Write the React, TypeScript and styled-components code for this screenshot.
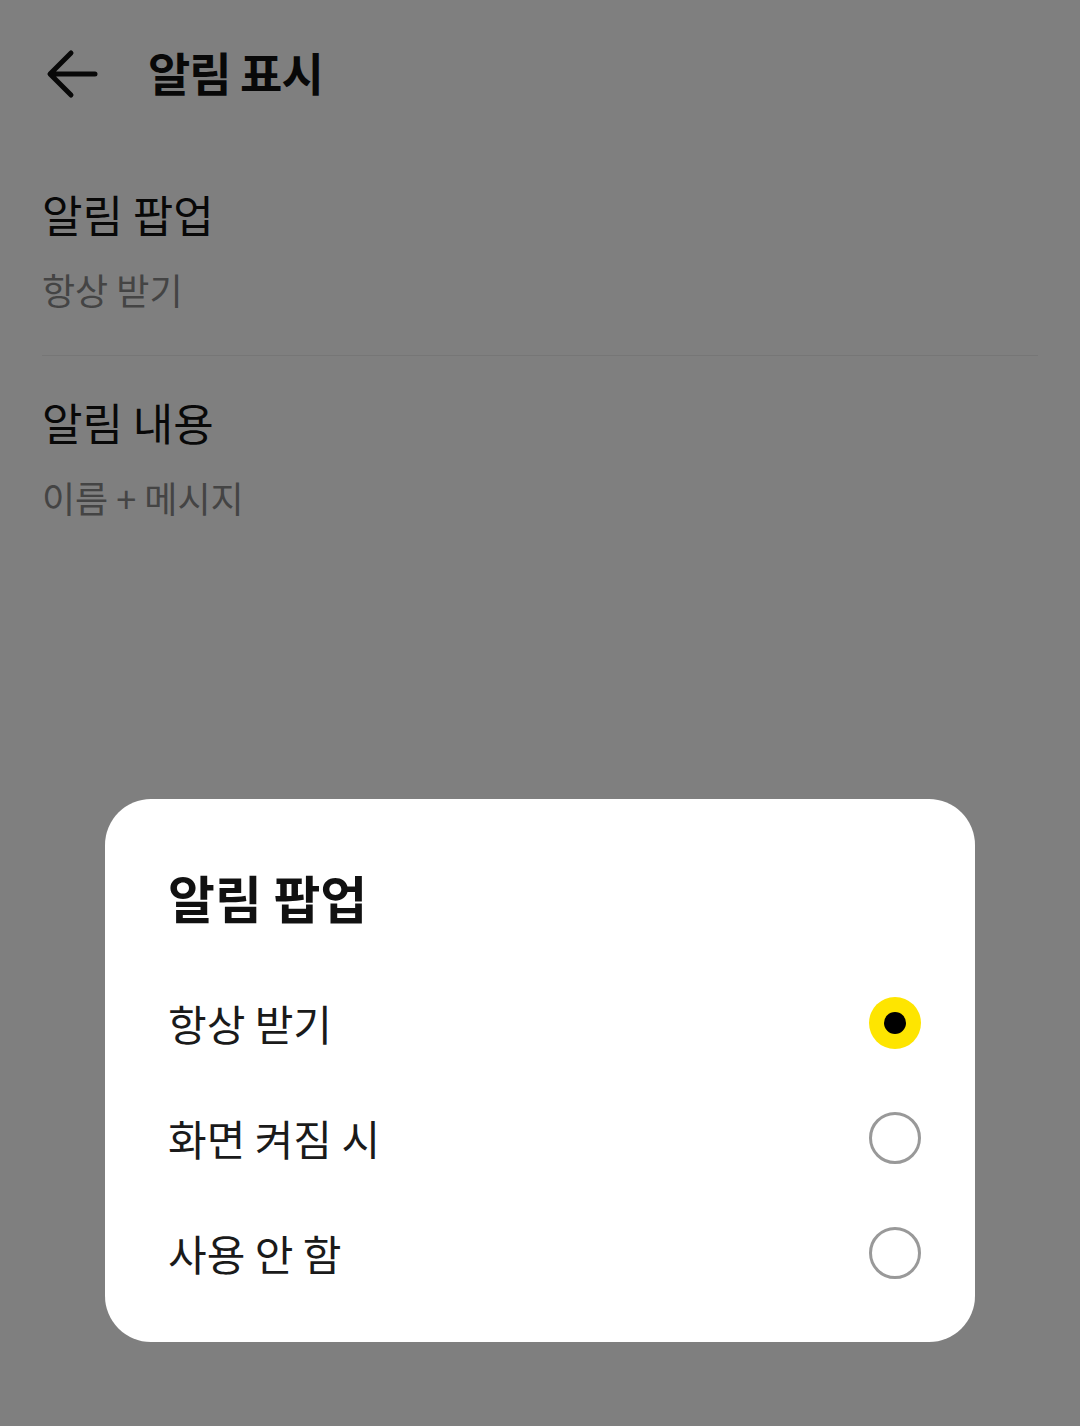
import styled, { createGlobalStyle } from 'styled-components';

const GlobalStyle = createGlobalStyle`
  html, body {
    margin: 0;
    padding: 0;
    background: #ffffff;
    font-family: "Noto Sans CJK KR", "Noto Sans", sans-serif;
  }
`;

const Page = styled.div`
  width: 1080px;
  height: 1426px;
  background: #ffffff;
  overflow: hidden;
`;

const Header = styled.header`
  display: flex;
  align-items: center;
  height: 142px;
  padding: 0 0 6px 44px;
  gap: 48px;
`;

const BackButton = styled.button`
  display: flex;
  align-items: center;
  justify-content: center;
  width: 56px;
  height: 56px;
  margin-top: 6px;
  padding: 0;
  border: none;
  background: none;
  color: #111111;
`;

const HeaderTitle = styled.h1`
  margin: 0;
  font-size: 46px;
  font-weight: 700;
  letter-spacing: -1px;
  color: #111111;
`;

const SettingItem = styled.div<{ $divider?: boolean }>`
  margin: 0 42px;
  padding: 36px 0 ${({ $divider }) => ($divider ? '42px' : '40px')};
  border-bottom: ${({ $divider }) => ($divider ? '1px solid #ececec' : 'none')};
`;

const ItemTitle = styled.div`
  font-size: 44px;
  line-height: 60px;
  color: #111111;
`;

const ItemValue = styled.div`
  margin-top: 21px;
  font-size: 36px;
  line-height: 48px;
  color: #888888;
`;

const Scrim = styled.div`
  position: fixed;
  inset: 0;
  background: rgba(0, 0, 0, 0.5);
  display: flex;
  flex-direction: column;
  justify-content: flex-end;
  align-items: center;
  padding-bottom: 84px;
`;

const Dialog = styled.div`
  width: 870px;
  box-sizing: border-box;
  background: #ffffff;
  border-radius: 46px;
  padding: 60px 54px 32px 63px;
`;

const DialogTitle = styled.h2`
  margin: 0 0 30px;
  font-size: 51px;
  line-height: 76px;
  font-weight: 700;
  color: #111111;
`;

const Option = styled.label`
  display: flex;
  align-items: center;
  justify-content: space-between;
  height: 115px;
`;

const OptionText = styled.span`
  font-size: 42px;
  color: #1a1a1a;
`;

const Radio = styled.span<{ $checked?: boolean }>`
  display: flex;
  align-items: center;
  justify-content: center;
  box-sizing: border-box;
  width: 52px;
  height: 52px;
  border-radius: 50%;
  background: ${({ $checked }) => ($checked ? '#fee500' : 'transparent')};
  border: ${({ $checked }) => ($checked ? 'none' : '3.5px solid #999999')};

  &::after {
    content: '';
    display: ${({ $checked }) => ($checked ? 'block' : 'none')};
    width: 22px;
    height: 22px;
    border-radius: 50%;
    background: #000000;
  }
`;

const options = ['항상 받기', '화면 켜짐 시', '사용 안 함'];

export default function App() {
  return (
    <Page>
      <GlobalStyle />
      <Header>
        <BackButton aria-label="뒤로">
          <svg width="54" height="54" viewBox="0 0 54 54" fill="none">
            <path
              d="M50 27H7M26 6L5 27L26 48"
              stroke="currentColor"
              strokeWidth="5"
              strokeLinecap="round"
              strokeLinejoin="round"
            />
          </svg>
        </BackButton>
        <HeaderTitle>알림 표시</HeaderTitle>
      </Header>

      <SettingItem $divider>
        <ItemTitle>알림 팝업</ItemTitle>
        <ItemValue>항상 받기</ItemValue>
      </SettingItem>
      <SettingItem>
        <ItemTitle>알림 내용</ItemTitle>
        <ItemValue>이름 + 메시지</ItemValue>
      </SettingItem>

      <Scrim>
        <Dialog>
          <DialogTitle>알림 팝업</DialogTitle>
          {options.map((label, i) => (
            <Option key={label}>
              <OptionText>{label}</OptionText>
              <Radio $checked={i === 0} />
            </Option>
          ))}
        </Dialog>
      </Scrim>
    </Page>
  );
}
